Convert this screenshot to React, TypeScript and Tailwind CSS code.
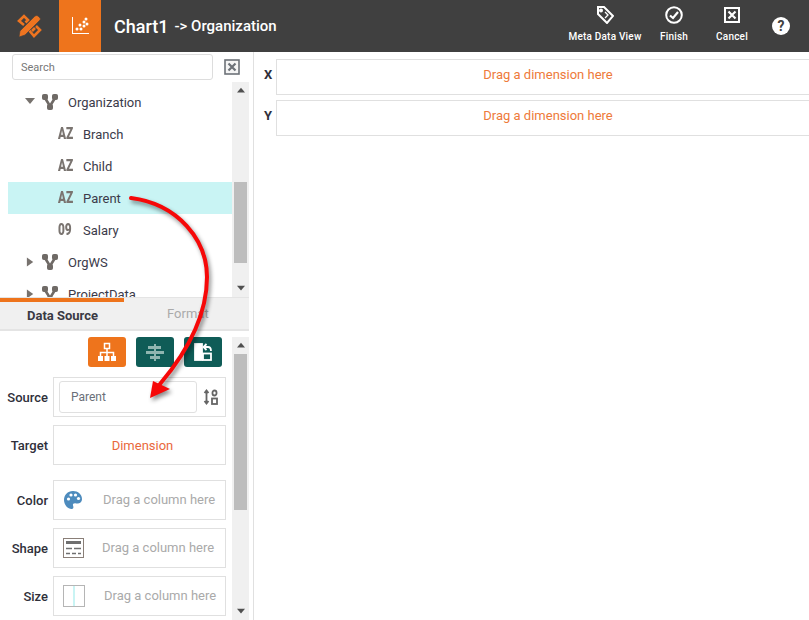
const fields = [
  { glyph: 'AZ', name: 'Branch' },
  { glyph: 'AZ', name: 'Child' },
  { glyph: 'AZ', name: 'Parent', selected: true },
  { glyph: '09', name: 'Salary' },
];

const Triangle = ({ dir, className = '' }: { dir: 'up' | 'down' | 'right'; className?: string }) => {
  const points = { up: '0,7 5,1 10,7', down: '0,1 10,1 5,7', right: '1,0 8,5 1,10' }[dir];
  return (
    <svg viewBox="0 0 10 10" className={className} fill="currentColor">
      <polygon points={points} />
    </svg>
  );
};

const HierarchyIcon = () => (
  <svg width="16" height="16" viewBox="0 0 16 16" fill="#6f6a66" stroke="#6f6a66">
    <rect x="0.5" y="0.5" width="5" height="5" rx="1" />
    <rect x="10.5" y="0.5" width="5" height="5" rx="1" />
    <rect x="5.5" y="10.5" width="5" height="5" rx="1" />
    <path d="M3 4 L8 12 L13 4" fill="none" strokeWidth="2.6" />
  </svg>
);

const TreeGroup = ({ name, open }: { name: string; open?: boolean }) => (
  <div className="flex h-8 items-center">
    <Triangle
      dir={open ? 'down' : 'right'}
      className={open ? 'ml-[17px] mr-[7px] h-[10px] w-[10px] text-[#77726e]' : 'ml-[18px] mr-[7px] h-[10px] w-[9px] text-[#77726e]'}
    />
    <HierarchyIcon />
    <span className="ml-[10px] mt-[2px] text-[13px] text-[#3b3b4a]">{name}</span>
  </div>
);

const Scrollbar = ({ top, height, className }: { top: string; height: string; className: string }) => (
  <div className={`flex w-[17px] shrink-0 flex-col items-center bg-[#f0f0f0] ${className}`}>
    <Triangle dir="up" className={`mt-[5px] h-[8px] w-[8px] shrink-0 text-[#505050] ${top}`} />
    <div className={`w-[13px] shrink-0 bg-[#bdbdbd] ${height}`} />
    <div className="flex-1" />
    <Triangle dir="down" className="mb-[4px] h-[8px] w-[8px] shrink-0 text-[#505050]" />
  </div>
);

const BoxX = ({ size, color, fill, weight = 1.6 }: { size: number; color: string; fill: string; weight?: number }) => (
  <svg width={size} height={size} viewBox="0 0 16 16" fill="none">
    <rect x="1" y="1" width="14" height="14" fill={fill} stroke={color} strokeWidth={weight} />
    <path d="M4.5 4.5 L11.5 11.5 M11.5 4.5 L4.5 11.5" stroke={color} strokeWidth="2.2" />
  </svg>
);

const RowLabel = ({ children }: { children: string }) => (
  <span className="mt-[2px] w-12 text-right text-[13px] font-medium text-[#2f2f3a]">{children}</span>
);

const DropRow = ({ label, icon, textClass }: { label: string; icon: React.ReactNode; textClass: string }) => (
  <div className="flex h-10 items-center">
    <RowLabel>{label}</RowLabel>
    <div className="ml-[5px] flex h-10 w-[173px] items-center border border-[#e0e0e0]">
      <div className="ml-[9px] w-[22px]">{icon}</div>
      <span className={`text-[13px] text-[#aaaaaa] ${textClass}`}>Drag a column here</span>
    </div>
  </div>
);

const HeaderAction = ({ label, icon, className }: { label: string; icon: React.ReactNode; className: string }) => (
  <div className={`flex flex-col items-center pb-[4px] ${className}`}>
    <div className="flex h-[18px] items-center justify-center">{icon}</div>
    <span className="mt-[7px] whitespace-nowrap text-[10px] font-medium leading-3 tracking-[0.2px] text-white">{label}</span>
  </div>
);

const AxisRow = ({ label }: { label: string }) => (
  <div className="flex items-center">
    <span className="mb-[4px] w-[22px] shrink-0 pl-[10px] text-[13px] font-bold text-[#2f2f3a]">{label}</span>
    <div className="flex h-9 w-[544px] shrink-0 items-start justify-center border border-[#e0e0e0] pt-[7px] text-[13px] leading-4 text-[#ee7a3a]">
      Drag a dimension here
    </div>
  </div>
);

export default function App() {
  return (
    <div className="relative h-[620px] w-[809px] overflow-hidden bg-white font-['Roboto',sans-serif]">
      <header className="flex h-[52px] items-center bg-[#404040] text-white">
        <div className="ml-[17px] flex w-[42px]">
          <svg width="25" height="24" viewBox="0 0 25 24" fill="none" stroke="#ee7420">
            <path d="M7 11 L2 7 L7 2 L11 6 L8.5 8.5 M15 17 L18 14 M11 15 L17 22 L23 16 L19 12" strokeWidth="2.6" />
            <path d="M2 23 L3 17 L18 2 Q20 1 21 2 L23 4 Q24 5 23 6 L8 21 Z" fill="#ee7420" stroke="#404040" strokeWidth="0.6" />
          </svg>
        </div>
        <div className="flex h-[52px] w-[42px] items-center justify-center bg-[#ee741c]">
          <svg width="18" height="18" viewBox="0 0 18 18" fill="white" stroke="none">
            <path d="M1 0 H2 V16 H18 V17 H1 Z" />
            <circle cx="6" cy="12" r="1.5" /><circle cx="9" cy="8" r="1.5" /><circle cx="10" cy="12" r="1.5" />
            <circle cx="13" cy="5" r="1.5" /><circle cx="13" cy="9" r="1.5" /><circle cx="15" cy="2" r="1.5" /><circle cx="16" cy="7" r="1.5" />
          </svg>
        </div>
        <span className="ml-[13px] text-[18px] font-medium">Chart1</span>
        <span className="ml-[6px] mt-[1px] text-[15px] font-medium">-&gt; Organization</span>
        <div className="flex-1" />
        <HeaderAction
          label="Meta Data View"
          className="w-[80px]"
          icon={
            <svg width="18" height="18" viewBox="0 0 18 18" fill="none" stroke="white" strokeWidth="2">
              <path d="M2 1 H8 L17 10 L11 17 L2 8 Z" />
              <circle cx="5" cy="4.5" r="1" fill="white" />
              <path d="M9 6 L12 9 L9 12" strokeWidth="1.3" />
            </svg>
          }
        />
        <HeaderAction
          label="Finish"
          className="ml-[4px] w-[50px]"
          icon={
            <svg width="18" height="18" viewBox="0 0 18 18" fill="none" stroke="white" strokeWidth="2">
              <circle cx="9" cy="9" r="7.8" />
              <path d="M5 9.5 L8 12 L13 6" strokeWidth="2.2" />
            </svg>
          }
        />
        <HeaderAction
          label="Cancel"
          className="ml-[8px] w-[50px]"
          icon={<BoxX size={16} color="white" fill="none" weight={2} />}
        />
        <div className="ml-[15px] mr-[19px] flex h-[18px] w-[18px] items-center justify-center rounded-full bg-white text-[14px] font-bold text-[#404040]">
          ?
        </div>
      </header>

      <div className="flex h-[568px]">
        <aside className="flex w-[254px] shrink-0 flex-col border-r border-[#e0e0e0]">
          <div className="flex h-[30px] items-start pl-3 pt-[2px]">
            <div className="flex h-[26px] w-[201px] items-center rounded-[3px] border border-[#dddddd] pl-2 pt-[2px] text-[11px] text-[#777777]">
              Search
            </div>
            <div className="ml-[11px] mt-[5px]">
              <BoxX size={16} color="#6d7278" fill="#f5f5f5" />
            </div>
          </div>

          <div className="flex h-[215px] pl-2">
            <div className="w-56 overflow-hidden pt-1">
              <TreeGroup name="Organization" open />
              {fields.map((field) => (
                <div key={field.name} className={`flex h-8 items-center ${field.selected ? 'bg-[#c9f4f4]' : ''}`}>
                  <span className="ml-[50px] inline-block w-[25px] origin-left scale-x-[0.74] text-[16px] font-black text-[#7a7470]">
                    {field.glyph}
                  </span>
                  <span className="mt-[2px] text-[13px] text-[#3b3b4a]">{field.name}</span>
                </div>
              ))}
              <TreeGroup name="OrgWS" />
              <TreeGroup name="ProjectData" />
            </div>
            <Scrollbar top="mb-[87px]" height="h-[81px]" className="h-[215px]" />
          </div>

          <div className="flex h-[34px] w-[249px] flex-col border-t border-b-2 border-[#e4e4e4] bg-[#f0f0f0]">
            <div className="h-1 w-[124px] shrink-0 bg-[#ee741c]" />
            <div className="flex">
              <span className="ml-[27px] mt-[4px] text-[13px] font-bold text-[#3a3a44]">Data Source</span>
              <span className="ml-[69px] mt-[2px] text-[13px] text-[#aaaaaa]">Format</span>
            </div>
          </div>

          <div className="flex flex-1 pt-[6px]">
            <div className="w-[232px]">
              <div className="flex h-[30px] justify-end gap-[10px] pr-[10px]">
                <div className="flex w-[38px] items-center justify-center rounded-[3px] bg-[#ee741c]">
                  <svg width="20" height="20" viewBox="0 0 20 20" fill="white" stroke="white">
                    <rect x="7.5" y="1.5" width="5" height="5" fill="none" strokeWidth="1.5" />
                    <path d="M10 7 V10 M3.5 14 V10.5 H16.5 V14 M10 10.5 V14" fill="none" strokeWidth="1.5" />
                    <rect x="1" y="14" width="5" height="5" strokeWidth="0" />
                    <rect x="7.5" y="14" width="5" height="5" strokeWidth="0" />
                    <rect x="14" y="14" width="5" height="5" strokeWidth="0" />
                  </svg>
                </div>
                <div className="flex w-[38px] items-center justify-center rounded-[3px] bg-[#0f5c57]">
                  <svg width="18" height="17" viewBox="0 0 18 17" fill="#8fb5b0">
                    <rect x="8" y="0" width="2" height="17" />
                    <rect x="2" y="2" width="13" height="3" />
                    <rect x="0" y="7" width="18" height="3" />
                    <rect x="4" y="12" width="10" height="3" />
                  </svg>
                </div>
                <div className="flex w-[38px] items-center justify-center rounded-[3px] bg-[#0f5c57]">
                  <svg width="20" height="20" viewBox="0 0 20 20" fill="none" stroke="white" strokeWidth="1.8">
                    <rect x="2" y="2" width="7" height="16" fill="white" />
                    <rect x="10" y="11.5" width="8" height="6.5" />
                    <path d="M11 5 H15 Q18 5 18 9" />
                    <path d="M13.5 2 L10.5 5 L13.5 8" />
                  </svg>
                </div>
              </div>

              <div className="mt-[10px] flex h-10 items-center">
                <RowLabel>Source</RowLabel>
                <div className="ml-[5px] flex h-10 w-[173px] items-center border border-[#e0e0e0] pl-[5px]">
                  <div className="flex h-8 w-[138px] items-center rounded-[3px] border border-[#e0e0e0] pl-[11px] text-[12px] text-[#6a6f78]">
                    Parent
                  </div>
                  <svg className="ml-[6px]" width="16" height="16" viewBox="0 0 16 16" fill="none" stroke="#666666" strokeWidth="1.8">
                    <path d="M3.5 2 V14 M1.5 4 L3.5 1.5 L5.5 4 M1.5 12 L3.5 14.5 L5.5 12" />
                    <rect x="9.5" y="1.5" width="4" height="5" rx="2" />
                    <rect x="9" y="9.5" width="5" height="5.5" />
                  </svg>
                </div>
              </div>

              <div className="mt-2 flex h-10 items-center">
                <RowLabel>Target</RowLabel>
                <div className="ml-[5px] flex h-10 w-[173px] items-center justify-center border border-[#e0e0e0] pl-[6px] pt-[2px] text-[13px] text-[#e9683c]">
                  Dimension
                </div>
              </div>

              <div className="mt-[15px] flex flex-col gap-2">
                <DropRow
                  label="Color"
                  textClass="ml-[18px]"
                  icon={
                    <svg width="20" height="20" viewBox="0 0 20 20">
                      <path d="M10 1 C4.5 1 1 5 1 10 C1 15 5 19 8.5 19 C11 19 10.5 16.5 10 15.5 C9.5 14 11 13 13 13.5 C16 14 19 12.5 19 9 C19 4.5 15 1 10 1 Z" fill="#4d8bbd" />
                      <circle cx="5.5" cy="9" r="1.6" fill="white" /><circle cx="8" cy="5" r="1.6" fill="white" />
                      <circle cx="12.5" cy="5" r="1.6" fill="white" /><circle cx="15.5" cy="8.5" r="1.6" fill="white" />
                    </svg>
                  }
                />
                <DropRow
                  label="Shape"
                  textClass="ml-[17px]"
                  icon={
                    <svg width="21" height="21" viewBox="0 0 21 21" fill="none" stroke="#6f6f6f">
                      <rect x="0.5" y="0.5" width="20" height="19" stroke="#8a7f78" />
                      <rect x="3" y="3" width="15" height="3" fill="#6f6f6f" stroke="none" />
                      <path d="M3 10.5 H9 M11 10.5 H18 M3 15.5 H7 M9 15.5 H13 M15 15.5 H18" strokeWidth="1.5" />
                    </svg>
                  }
                />
                <DropRow
                  label="Size"
                  textClass="ml-[19px]"
                  icon={
                    <svg width="22" height="22" viewBox="0 0 22 22" fill="none">
                      <rect x="10" y="1" width="2" height="20" fill="#c9f4f4" />
                      <rect x="0.5" y="0.5" width="21" height="21" stroke="#b5b5b5" />
                    </svg>
                  }
                />
              </div>
            </div>
            <Scrollbar top="mb-[4px]" height="h-[156px]" className="h-[283px]" />
          </div>
        </aside>

        <main className="flex flex-1 flex-col gap-[5px] overflow-hidden pt-[7px]">
          <AxisRow label="X" />
          <AxisRow label="Y" />
        </main>
      </div>

      <svg className="pointer-events-none absolute left-0 top-0 h-[620px] w-[809px] drop-shadow-[2px_3px_2px_rgba(0,0,0,0.45)]" viewBox="0 0 809 620" fill="none">
        <path d="M131 198 C178 204 207 240 207 277 C207 320 182 358 160 384" stroke="#f60808" strokeWidth="4" strokeLinecap="round" />
        <polygon points="150,398 153,381 170,389" fill="#f60808" />
      </svg>
    </div>
  );
}
